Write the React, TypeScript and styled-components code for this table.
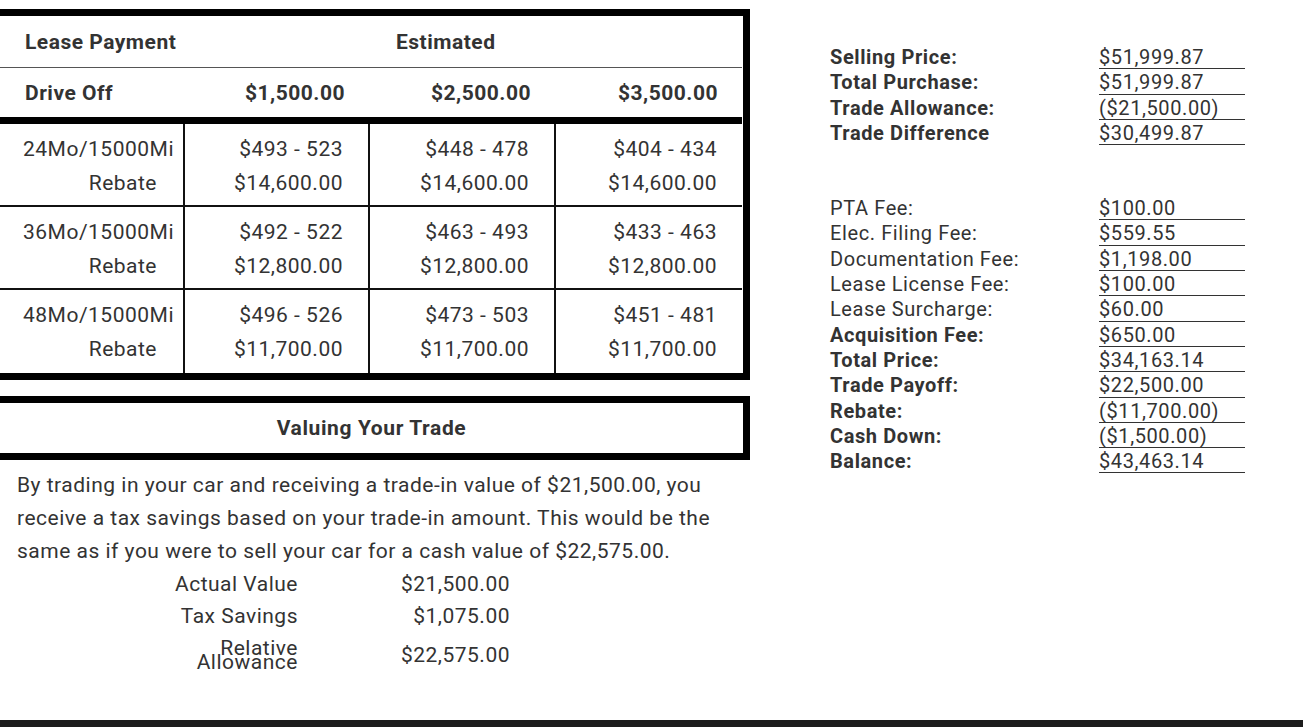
import React from 'react'
import styled, { createGlobalStyle } from 'styled-components'

const GlobalStyle = createGlobalStyle`
  html, body {
    margin: 0;
    padding: 0;
    background: #ffffff;
  }
  body {
    font-family: Roboto, 'Liberation Sans', Arial, sans-serif;
    color: #333333;
  }
`

const Page = styled.div`
  height: 727px;
  display: flex;
  flex-direction: column;
  overflow: hidden;
`

const Main = styled.div`
  flex: 1;
  display: flex;
  align-items: flex-start;
`

const LeftCol = styled.div`
  width: 750px;
  padding-top: 9px;
`

const LeaseTable = styled.div`
  border: 7px solid #000;
  border-left: none;
  display: grid;
  grid-template-columns: 185px 185px 186px 186px;
  font-size: 21px;
  letter-spacing: 0.5px;
`

const HeadCell = styled.div<{ $span?: number; $pad?: number; $align?: string; $line?: boolean; $thick?: boolean }>`
  grid-column: span ${({ $span }) => $span || 1};
  height: ${({ $thick }) => ($thick ? '49px' : '51px')};
  display: flex;
  align-items: center;
  justify-content: ${({ $align }) => ($align === 'right' ? 'flex-end' : 'flex-start')};
  padding: 0 ${({ $align, $pad }) => ($align === 'right' ? `${$pad ?? 25}px` : '0')} 0 ${({ $align, $pad }) => ($align === 'right' ? '0' : `${$pad ?? 25}px`)};
  font-weight: 700;
  border-bottom: ${({ $line, $thick }) => ($thick ? '7px solid #000' : $line ? '1.5px solid #555' : 'none')};
`

const BodyCell = styled.div<{ $first?: boolean; $last?: boolean; $bottom?: boolean }>`
  height: 83px;
  box-sizing: border-box;
  padding: 8px ${({ $first }) => ($first ? '9px' : '25px')} 0 0;
  border-right: ${({ $last }) => ($last ? 'none' : '2px solid #111')};
  border-bottom: ${({ $bottom }) => ($bottom ? 'none' : '2px solid #111')};
  display: flex;
  flex-direction: column;
  align-items: flex-end;
  line-height: 34px;
`

const SubLine = styled.span<{ $indent?: number }>`
  padding-right: ${({ $indent }) => $indent || 0}px;
`

const TradeBox = styled.div`
  margin-top: 16px;
  border: 7px solid #000;
  border-left: none;
  height: 50px;
  display: flex;
  align-items: center;
  justify-content: center;
  font-size: 21px;
  letter-spacing: 0.6px;
  font-weight: 700;
`

const Paragraph = styled.p`
  margin: 9px 0 0;
  padding-left: 17px;
  font-size: 21px;
  letter-spacing: 0.5px;
  line-height: 33px;
  width: 720px;
`

const ValueGrid = styled.div`
  display: grid;
  grid-template-columns: 298px 212px;
  font-size: 21px;
  letter-spacing: 0.5px;
`

const ValueLabel = styled.div<{ $tall?: boolean; $squash?: boolean }>`
  text-align: right;
  height: ${({ $tall }) => ($tall ? '46px' : '32px')};
  display: flex;
  flex-direction: column;
  justify-content: center;
  align-items: flex-end;
  line-height: ${({ $squash }) => ($squash ? '14px' : '32px')};
`

const ValueAmount = styled.div<{ $tall?: boolean }>`
  text-align: right;
  height: ${({ $tall }) => ($tall ? '46px' : '32px')};
  line-height: ${({ $tall }) => ($tall ? '46px' : '32px')};
`

const RightCol = styled.div`
  margin-left: 80px;
  padding-top: 44px;
  display: flex;
  flex-direction: column;
  gap: 50px;
`

const SummaryGroup = styled.div`
  display: grid;
  grid-template-columns: 269px 146px;
  font-size: 20px;
  letter-spacing: 0.6px;
`

const SummaryLabel = styled.div<{ $bold?: boolean }>`
  height: 25.3px;
  line-height: 22px;
  padding-top: 2px;
  box-sizing: border-box;
  font-weight: ${({ $bold }) => ($bold ? 700 : 400)};
`

const SummaryValue = styled.div`
  height: 25.3px;
  line-height: 22px;
  padding-top: 2px;
  box-sizing: border-box;
  border-bottom: 1.5px solid #333;
  white-space: nowrap;
`

const FooterBar = styled.div`
  height: 7px;
  background: #1c1c1c;
`

const leaseRows = [
  { term: '24Mo/15000Mi', ranges: ['$493 - 523', '$448 - 478', '$404 - 434'], rebate: '$14,600.00' },
  { term: '36Mo/15000Mi', ranges: ['$492 - 522', '$463 - 493', '$433 - 463'], rebate: '$12,800.00' },
  { term: '48Mo/15000Mi', ranges: ['$496 - 526', '$473 - 503', '$451 - 481'], rebate: '$11,700.00' },
]

const purchase = [
  { label: 'Selling Price:', value: '$51,999.87', bold: true },
  { label: 'Total Purchase:', value: '$51,999.87', bold: true },
  { label: 'Trade Allowance:', value: '($21,500.00)', bold: true },
  { label: 'Trade Difference', value: '$30,499.87', bold: true },
]

const fees = [
  { label: 'PTA Fee:', value: '$100.00' },
  { label: 'Elec. Filing Fee:', value: '$559.55' },
  { label: 'Documentation Fee:', value: '$1,198.00' },
  { label: 'Lease License Fee:', value: '$100.00' },
  { label: 'Lease Surcharge:', value: '$60.00' },
  { label: 'Acquisition Fee:', value: '$650.00', bold: true },
  { label: 'Total Price:', value: '$34,163.14', bold: true },
  { label: 'Trade Payoff:', value: '$22,500.00', bold: true },
  { label: 'Rebate:', value: '($11,700.00)', bold: true },
  { label: 'Cash Down:', value: '($1,500.00)', bold: true },
  { label: 'Balance:', value: '$43,463.14', bold: true },
]

const App = () => {
  return (
    <Page>
      <GlobalStyle />
      <Main>
        <LeftCol>
          <LeaseTable>
            <HeadCell $span={2} $line>Lease Payment</HeadCell>
            <HeadCell $span={2} $line $pad={26}>Estimated</HeadCell>

            <HeadCell $thick>Drive Off</HeadCell>
            <HeadCell $thick $align="right">$1,500.00</HeadCell>
            <HeadCell $thick $align="right">$2,500.00</HeadCell>
            <HeadCell $thick $align="right" $pad={24}>$3,500.00</HeadCell>

            {leaseRows.map((row, i) => (
              <React.Fragment key={row.term}>
                <BodyCell $first $bottom={i === leaseRows.length - 1}>
                  <span>{row.term}</span>
                  <SubLine $indent={17}>Rebate</SubLine>
                </BodyCell>
                {row.ranges.map((r, j) => (
                  <BodyCell
                    key={r}
                    $last={j === 2}
                    $bottom={i === leaseRows.length - 1}
                  >
                    <span>{r}</span>
                    <span>{row.rebate}</span>
                  </BodyCell>
                ))}
              </React.Fragment>
            ))}
          </LeaseTable>

          <TradeBox>Valuing Your Trade</TradeBox>

          <Paragraph>
            By trading in your car and receiving a trade-in value of $21,500.00, you receive a tax savings based on
            your trade-in amount. This would be the same as if you were to sell your car for a cash value of
            $22,575.00.
          </Paragraph>

          <ValueGrid>
            <ValueLabel>Actual Value</ValueLabel>
            <ValueAmount>$21,500.00</ValueAmount>
            <ValueLabel>Tax Savings</ValueLabel>
            <ValueAmount>$1,075.00</ValueAmount>
            <ValueLabel $tall $squash>
              <span>Relative</span>
              <span>Allowance</span>
            </ValueLabel>
            <ValueAmount $tall>$22,575.00</ValueAmount>
          </ValueGrid>
        </LeftCol>

        <RightCol>
          <SummaryGroup>
            {purchase.map((p) => (
              <React.Fragment key={p.label}>
                <SummaryLabel $bold={p.bold}>{p.label}</SummaryLabel>
                <SummaryValue>{p.value}</SummaryValue>
              </React.Fragment>
            ))}
          </SummaryGroup>
          <SummaryGroup>
            {fees.map((f) => (
              <React.Fragment key={f.label}>
                <SummaryLabel $bold={f.bold}>{f.label}</SummaryLabel>
                <SummaryValue>{f.value}</SummaryValue>
              </React.Fragment>
            ))}
          </SummaryGroup>
        </RightCol>
      </Main>
      <FooterBar />
    </Page>
  )
}

export default App
